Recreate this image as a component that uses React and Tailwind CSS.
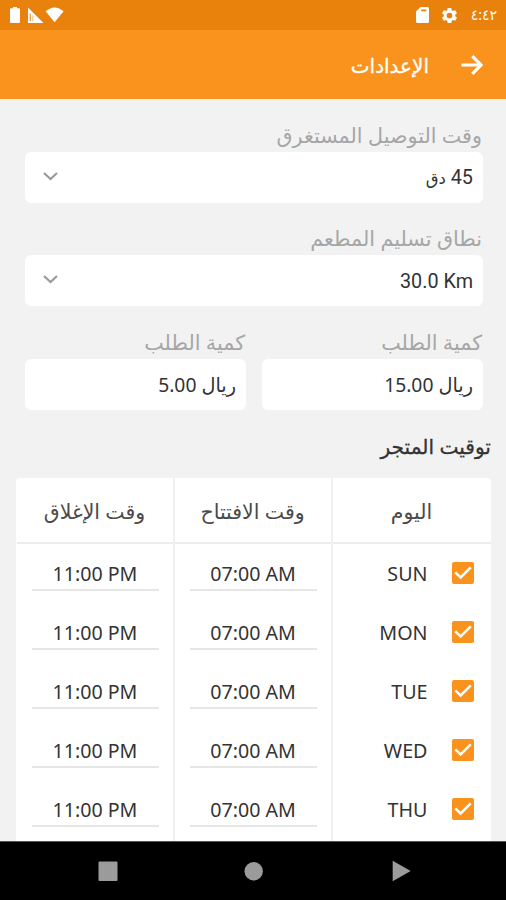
const days = ['SUN', 'MON', 'TUE', 'WED', 'THU']

export default function App() {
    return (
        <div dir="rtl" className="w-[506px] h-[900px] overflow-hidden flex flex-col bg-[#f2f2f2] text-[#333] font-['Noto_Sans','DejaVu_Sans',sans-serif]">
            <StatusBar />
            <header className="h-[68.5px] shrink-0 bg-[#fa931e] flex items-center pr-[23px] text-white">
                <svg className="mt-0.5" width="22" height="20" viewBox="0 0 22 20" fill="none" stroke="currentColor" strokeWidth="3.2">
                    <path d="M0.5 10H19.5M11.3 1.2L20 10L11.3 18.8" />
                </svg>
                <h1 className="mr-8 mt-1 text-[20px] leading-7 w-[78px] whitespace-nowrap [-webkit-text-stroke:0.3px]">الإعدادات</h1>
            </header>

            <main className="flex-1 min-h-0 overflow-hidden">
                <div className="pr-[23px] pl-[25px] pt-[22px]">
                    <Field label="وقت التوصيل المستغرق" dropdown>45 <span className="text-[16.5px]">دق</span></Field>
                    <Field label="نطاق تسليم المطعم" dropdown><bdi>30.0 Km</bdi></Field>
                    <div className="flex gap-4">
                        <Field label="كمية الطلب">ريال 15.00</Field>
                        <Field label="كمية الطلب">ريال 5.00</Field>
                    </div>
                </div>
                <h2 className="pr-[15px] h-8 leading-[30px] text-[20.2px] [-webkit-text-stroke:0.3px]">توقيت المتجر</h2>
                <Timings />
            </main>

            <nav className="h-[59px] shrink-0 bg-black border-t border-[#555] flex items-center" dir="ltr">
                <svg width="506" height="58" viewBox="0 0 506 58" fill="#9b9b9b">
                    <rect x="98.5" y="19.5" width="19" height="19.5" rx="1" />
                    <circle cx="253.7" cy="29.2" r="9.2" />
                    <path d="M392.7 18.8L410.7 29L392.7 39.3Z" />
                </svg>
            </nav>
        </div>
    )
}

function StatusBar() {
    return (
        <div dir="ltr" className="h-[30px] shrink-0 bg-[#e8820c] flex items-center justify-between text-white pl-[9px] pr-[9px]">
            <svg width="56" height="18" viewBox="0 0 56 18" fill="currentColor">
                <path d="M4 1H8V2.2H10Q11 2.2 11 3.2V16Q11 17 10 17H2Q1 17 1 16V3.2Q1 2.2 2 2.2H4Z" />
                <path fillRule="evenodd" d="M19 1.5L34.5 17H19ZM20.8 7V15.2H21.8V8ZM23.6 9V15.2H24.2V9.7Z" />
                <path d="M36.6 5.3Q45.5 -2.3 54.6 5.3L45.6 16.2Z" />
            </svg>
            <div className="flex items-center">
                <svg width="13" height="16" viewBox="0 0 13 16" fill="currentColor">
                    <path fillRule="evenodd" d="M4.6 0H11.5Q13 0 13 1.5V14.5Q13 16 11.5 16H1.5Q0 16 0 14.5V4.6ZM5.2 2.6V4.2H10.4V2.6Z" />
                </svg>
                <svg className="ml-[11px]" width="19" height="19" viewBox="0 0 24 24" fill="currentColor">
                    <path d="M19.14 12.94c.04-.3.06-.61.06-.94s-.02-.64-.07-.94l2.03-1.58a.49.49 0 0 0 .12-.61l-1.92-3.32a.49.49 0 0 0-.59-.22l-2.39.96c-.5-.38-1.03-.7-1.62-.94l-.36-2.54a.48.48 0 0 0-.48-.41h-3.84a.48.48 0 0 0-.47.41l-.36 2.54c-.59.24-1.13.57-1.62.94l-2.39-.96a.49.49 0 0 0-.59.22L2.74 8.87a.48.48 0 0 0 .12.61l2.03 1.58c-.05.3-.09.63-.09.94s.02.64.07.94l-2.03 1.58a.49.49 0 0 0-.12.61l1.92 3.32c.12.22.37.29.59.22l2.39-.96c.5.38 1.03.7 1.62.94l.36 2.54c.05.24.24.41.48.41h3.84c.24 0 .44-.17.47-.41l.36-2.54c.59-.24 1.13-.56 1.62-.94l2.39.96c.22.08.47 0 .59-.22l1.92-3.32a.48.48 0 0 0-.12-.61zM12 15.6a3.6 3.6 0 1 1 0-7.2 3.6 3.6 0 0 1 0 7.2z" />
                </svg>
                <span className="ml-3 text-[14px] leading-5">٤:٤٢</span>
            </div>
        </div>
    )
}

function Field({ label, dropdown, children }) {
    return (
        <div className="flex-1 h-[103.5px]">
            <div className="h-[31px] leading-[29px] pr-px text-[20.7px] text-[#a6a6a6] whitespace-nowrap">{label}</div>
            <div className="h-[51px] bg-white rounded-md flex items-center justify-between pr-2.5 pl-[18px]">
                <span className={dropdown ? "pt-0.5 text-[19.8px] font-['Roboto','DejaVu_Sans',sans-serif]" : 'pt-0.5 text-[19.3px]'}>{children}</span>
                {dropdown && (
                    <svg className="-mt-0.5" width="15" height="9" viewBox="0 0 15 9" fill="none" stroke="#9a9a9a" strokeWidth="2.2">
                        <path d="M1 1L7.5 7L14 1" />
                    </svg>
                )}
            </div>
        </div>
    )
}

function Timings() {
    return (
        <div className="mx-[15.5px] mt-[14.5px] h-[364px] overflow-hidden rounded-t-sm bg-white grid grid-cols-[158px_158px_158px]">
            <Column title="اليوم">
                {days.map(day => (
                    <div key={day} className="h-[59px] flex items-center pr-4">
                        <svg width="24" height="24" viewBox="0 0 24 24">
                            <rect x="1" y="1" width="22" height="22" rx="2" fill="#fa931e" />
                            <path d="M4.3 11.4L9.6 16.4L19.8 6.4" fill="none" stroke="white" strokeWidth="2.5" />
                        </svg>
                        <span className="mr-[23px] pt-0.5 text-[19.7px]">{day}</span>
                    </div>
                ))}
            </Column>
            <Column title="وقت الافتتاح" divided>
                {days.map(day => <Time key={day}>07:00 AM</Time>)}
            </Column>
            <Column title="وقت الإغلاق" divided>
                {days.map(day => <Time key={day}>11:00 PM</Time>)}
            </Column>
        </div>
    )
}

function Column({ title, divided, children }) {
    return (
        <div className={divided ? 'border-r-2 border-[#f0f0f0]' : ''}>
            <div className="h-[66px] border-b-2 border-[#ececec] flex items-center justify-center pt-1 text-[20.5px] text-[#4a4a4a] whitespace-nowrap">{title}</div>
            {children}
        </div>
    )
}

function Time({ children }) {
    return (
        <div className="h-[59px] pr-[14px] pl-[15px]">
            <div dir="ltr" className="h-[47px] pt-[16px] border-b-2 border-[#e6e6e6] text-center text-[19.6px] leading-[28px]">{children}</div>
        </div>
    )
}
